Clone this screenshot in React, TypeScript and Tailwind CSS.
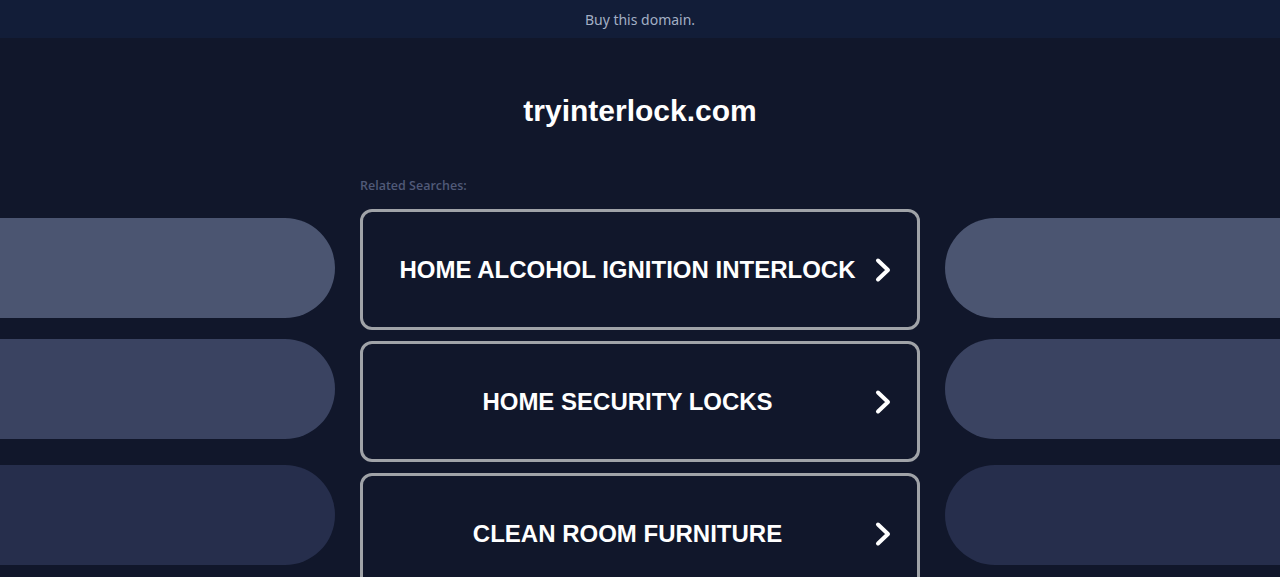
import React from 'react';

const searches = ['HOME ALCOHOL IGNITION INTERLOCK', 'HOME SECURITY LOCKS', 'CLEAN ROOM FURNITURE'];

const Chevron: React.FC = () => (
    <svg width="20" height="26" viewBox="0 0 20 26" fill="none" className="shrink-0">
        <path d="M5 3.5 L15 13 L5 22.5" stroke="#ffffff" strokeWidth="4" strokeLinecap="round" strokeLinejoin="round" />
    </svg>
);

const SidePills: React.FC<{ side: 'left' | 'right' }> = ({ side }) => {
    const round = side === 'left' ? 'rounded-r-full' : 'rounded-l-full';
    return (
        <div className="flex flex-col pt-[24px]">
            <div className={`h-[100px] bg-[#4b5571] ${round}`} />
            <div className={`h-[100px] mt-[21px] bg-[#3a4361] ${round}`} />
            <div className={`h-[100px] mt-[26px] bg-[#262e4c] ${round}`} />
        </div>
    );
};

const App: React.FC = () => {
    return (
        <div className="min-h-screen bg-[#11172b] overflow-hidden">
            {/* top bar */}
            <div className="h-[38px] bg-[#121d38] flex items-center justify-center">
                <span className="text-[14px] text-[#a3afc4]" style={{ fontFamily: '"Noto Sans", sans-serif' }}>Buy this domain.</span>
            </div>

            <h1 className="mt-[51px] text-center text-[30px] font-bold text-white leading-[44px]" style={{ fontFamily: '"Liberation Sans", Arial, sans-serif' }}>
                tryinterlock.com
            </h1>

            <div className="mt-[45px] grid grid-cols-[335px_560px_335px] gap-x-[25px]">
                <div />
                <p className="text-[12.5px] font-semibold text-[#505a78] leading-[16px]" style={{ fontFamily: '"Open Sans", sans-serif' }}>
                    Related Searches:
                </p>
                <div />

                <SidePills side="left" />
                <div className="flex flex-col gap-[11px] pt-[15px]">
                    {searches.map((s) => (
                        <a
                            key={s}
                            href="#"
                            className="h-[121px] rounded-[12px] border-[3px] border-[#a0a3a8] flex items-center pl-[24px] pr-[24px] gap-[5px]"
                        >
                            <span
                                className="flex-1 text-center text-[24px] font-bold text-white"
                                style={{ fontFamily: '"Liberation Sans", Arial, sans-serif' }}
                            >
                                {s}
                            </span>
                            <Chevron />
                        </a>
                    ))}
                </div>
                <SidePills side="right" />
            </div>
        </div>
    );
};

export default App;
